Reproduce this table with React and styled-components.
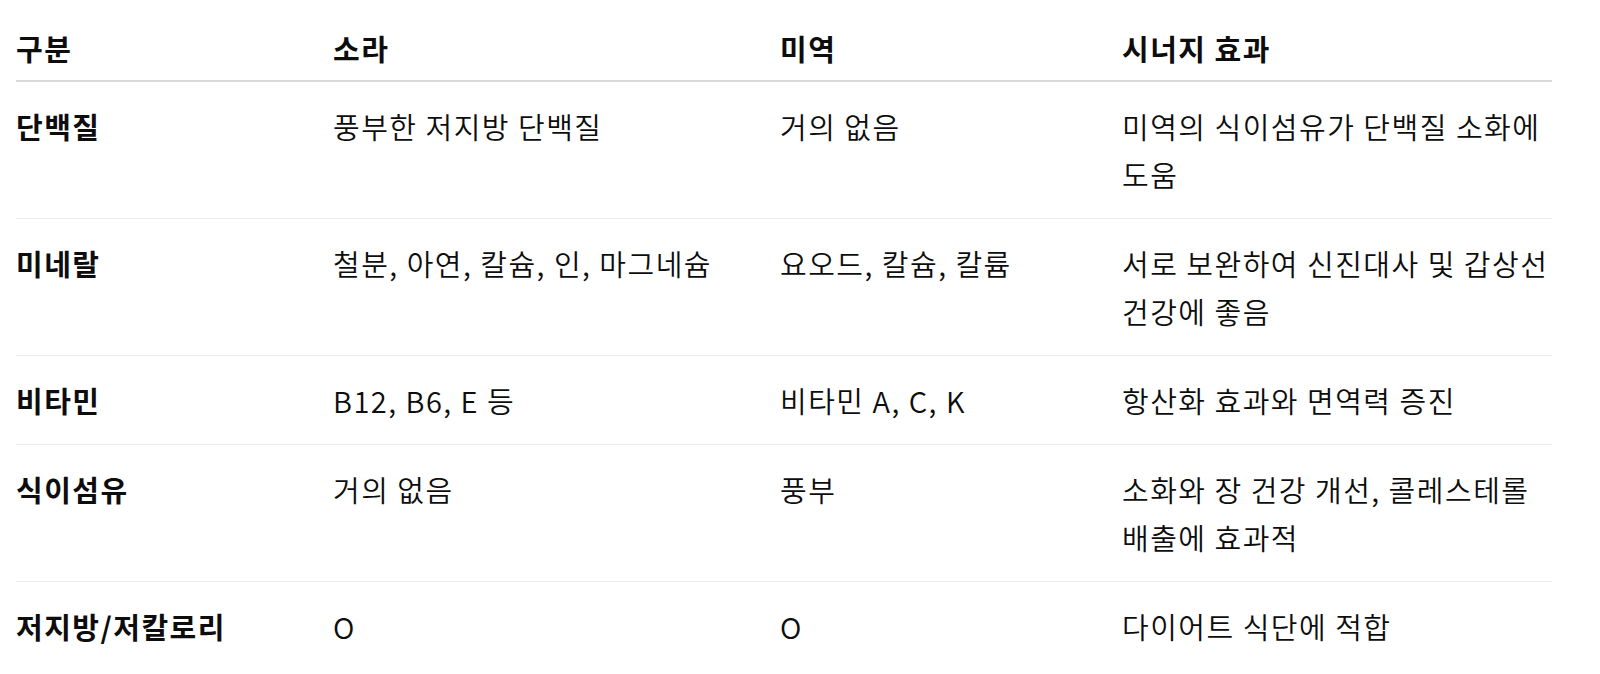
import React from "react";
import styled, { createGlobalStyle } from "styled-components";

const GlobalStyle = createGlobalStyle`
  body {
    margin: 0;
    background: #ffffff;
    color: #0d0d0d;
    font-family: "Noto Sans CJK KR", "Noto Sans", sans-serif;
  }
`;

const rows = [
  ["단백질", "풍부한 저지방 단백질", "거의 없음", "미역의 식이섬유가 단백질 소화에 도움"],
  ["미네랄", "철분, 아연, 칼슘, 인, 마그네슘", "요오드, 칼슘, 칼륨", "서로 보완하여 신진대사 및 갑상선 건강에 좋음"],
  ["비타민", "B12, B6, E 등", "비타민 A, C, K", "항산화 효과와 면역력 증진"],
  ["식이섬유", "거의 없음", "풍부", "소화와 장 건강 개선, 콜레스테롤 배출에 효과적"],
  ["저지방/저칼로리", "O", "O", "다이어트 식단에 적합"],
];

const columns = [
  { label: "구분", width: 317 },
  { label: "소라", width: 447 },
  { label: "미역", width: 342 },
  { label: "시너지 효과", width: 430 },
];

const App = () => {
  return (
    <Wrapper>
      <GlobalStyle />
      <Table>
        <colgroup>
          {columns.map((col) => (
            <col key={col.label} style={{ width: col.width }} />
          ))}
        </colgroup>
        <thead>
          <tr>
            {columns.map((col) => (
              <TableHeader key={col.label}>{col.label}</TableHeader>
            ))}
          </tr>
        </thead>
        <tbody>
          {rows.map((row, i) => (
            <Row key={row[0]} $last={i === rows.length - 1}>
              {row.map((cell, j) => (
                <TableData key={j} $strong={j === 0}>
                  {cell}
                </TableData>
              ))}
            </Row>
          ))}
        </tbody>
      </Table>
    </Wrapper>
  );
};

export default App;

const Wrapper = styled.div`
  padding: 0 48px 0 16px;
`;

const Table = styled.table`
  width: 1536px;
  table-layout: fixed;
  border-collapse: collapse;
  font-size: 29px;
  line-height: 48px;
  letter-spacing: 1.5px;
  word-break: keep-all;
`;

const TableHeader = styled.th`
  text-align: left;
  font-weight: 700;
  padding: 24px 0 8px;
  border-bottom: 2px solid #d9d9d9;
  white-space: nowrap;
`;

const Row = styled.tr`
  border-bottom: ${(p) => (p.$last ? "none" : "1px solid #ececec")};
`;

const TableData = styled.td`
  padding: 20px 0;
  vertical-align: top;
  font-weight: ${(p) => (p.$strong ? 700 : 350)};
`;
